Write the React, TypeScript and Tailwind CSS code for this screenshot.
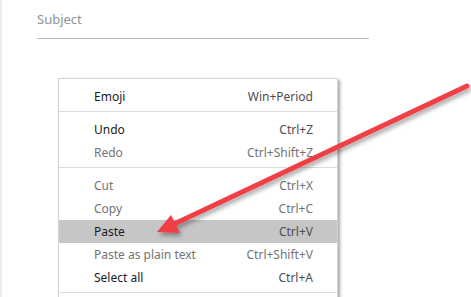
const items: { label?: string; keys?: string; on?: boolean; active?: boolean; sep?: boolean }[] = [
  { label: 'Emoji', keys: 'Win+Period', on: true },
  { sep: true },
  { label: 'Undo', keys: 'Ctrl+Z', on: true },
  { label: 'Redo', keys: 'Ctrl+Shift+Z' },
  { sep: true },
  { label: 'Cut', keys: 'Ctrl+X' },
  { label: 'Copy', keys: 'Ctrl+C' },
  { label: 'Paste', keys: 'Ctrl+V', on: true, active: true },
  { label: 'Paste as plain text', keys: 'Ctrl+Shift+V' },
  { label: 'Select all', keys: 'Ctrl+A', on: true },
  { sep: true },
];

export default function App() {
  return (
    <div
      className="relative w-[471px] h-[297px] overflow-hidden bg-white border-l-2 border-[#ececec]"
      style={{ fontFamily: '"Noto Sans", "Open Sans", sans-serif' }}
    >
      <div className="ml-[35px] w-[332px] pt-[10px] pb-[10px] border-b border-[#b8bdc5] text-[13px] leading-[18px] text-[#8b929b]">
        Subject
      </div>

      <div className="ml-[56px] mt-[39px] w-[280px] bg-white border border-[#d4d4d4] shadow-[2px_2px_3px_rgba(0,0,0,0.35)] pt-[6px]">
        {items.map((it, i) =>
          it.sep ? (
            <div key={i} className="mt-[3px] mb-[6px] h-px bg-[#dcdcdc]" />
          ) : (
            <div
              key={i}
              className={`h-[23px] flex items-center justify-between pl-[35px] pr-[24px] text-[12px] ${
                it.active ? 'bg-[#c6c6c6]' : ''
              }`}
            >
              <span className={it.on ? 'text-[#1b1b1b]' : 'text-[#747474]'}>{it.label}</span>
              <span className={it.on ? 'text-[#4d4d4d]' : 'text-[#747474]'}>{it.keys}</span>
            </div>
          )
        )}
      </div>

      <svg className="absolute left-0 top-0" width="471" height="297" viewBox="0 0 471 297">
        <defs>
          <filter id="sh" x="-20%" y="-20%" width="140%" height="140%">
            <feDropShadow dx="2" dy="3" stdDeviation="2" floodColor="#000" floodOpacity="0.35" />
          </filter>
        </defs>
        <g filter="url(#sh)">
          <line x1="465" y1="86" x2="170" y2="225" stroke="#ee3f44" strokeWidth="5" strokeLinecap="round" />
          <polygon points="155,232 169,215 178,233" fill="#ee3f44" />
        </g>
      </svg>
    </div>
  );
}
